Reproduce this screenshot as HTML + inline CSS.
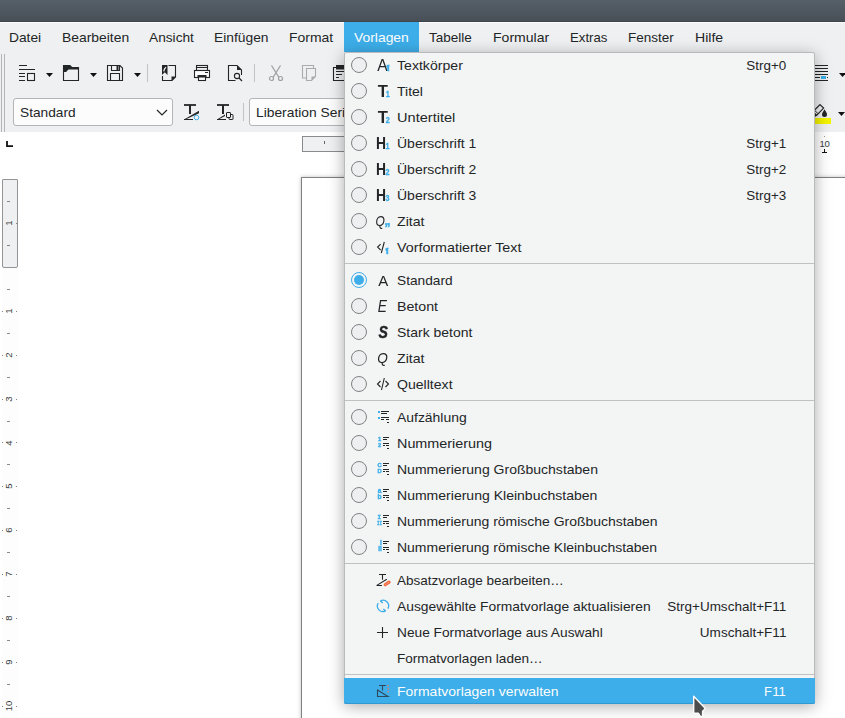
<!DOCTYPE html><html lang="de"><head><meta charset="utf-8"><title>Vorlagen</title><style>
*{box-sizing:border-box;margin:0;padding:0}
html,body{width:845px;height:718px;overflow:hidden;background:#fff}
body{position:relative;font-family:"Liberation Sans","DejaVu Sans",sans-serif;font-size:13.2px;color:#232627;line-height:1}
.abs{position:absolute}
.sx{display:inline-block;white-space:nowrap}
#title{left:0;top:0;width:845px;height:21px;background:linear-gradient(#566069,#484f57)}
#tline{left:0;top:21px;width:845px;height:1px;background:#3e454c}
#wline{left:0;top:22px;width:845px;height:1px;background:#fcfcfc}
#menubar{left:0;top:23px;width:845px;height:29px;background:#eff0f1}
#tb{left:0;top:52px;width:845px;height:80px;background:#eff0f1}
.mi{position:absolute;top:23px;height:30px;line-height:30px;white-space:nowrap}
#msel{left:344px;top:22px;width:75px;height:30px;background:#3daee9}
.t{position:absolute;white-space:nowrap;line-height:16px;height:16px}
.ic{position:absolute;width:16px;height:16px;overflow:visible}
.sep{position:absolute;width:1px;background:#c2c3c4}
.combo{position:absolute;height:28px;top:98px;border:1px solid #b3b5b6;border-radius:3px;background:#fcfcfc}
#popup{left:344px;top:52px;width:471px;height:651px;background:#f3f4f4;border:1px solid #b9babb;border-radius:2px;box-shadow:0 3px 16px 0 rgba(0,0,0,.34)}
.row{position:absolute;left:1px;width:468px;height:26px}
.row .lbl{position:absolute;left:51px;top:6px;line-height:16px;white-space:nowrap}
.row .sc{position:absolute;right:28px;top:6px;line-height:16px;white-space:nowrap}
.row .rad{position:absolute;left:5px;top:5px;width:16px;height:16px;border:1px solid #7f8182;border-radius:50%;background:#eeeff0}
.row .rad.on{border-color:#3daee9;background:#f3f4f4}
.row .rad.on::after{content:"";position:absolute;left:2px;top:2px;width:10px;height:10px;border-radius:50%;background:#3daee9}
.row svg{position:absolute;left:29px;top:5px;width:16px;height:16px;overflow:visible;will-change:transform}
.hsep{position:absolute;left:0;width:469px;height:1px;background:#c0c1c2}
.row.hl{background:#3daee9;color:#fcfcfc;left:-1px;width:471px;padding-left:2px;height:26px;border-radius:0 0 2px 2px;box-shadow:inset 0 -1px 0 #3198d2}
.row.hl .lbl{left:53px}.row.hl .sc{right:29px}.row.hl svg{left:31px}
</style></head><body><div class="abs" id="title"></div><div class="abs" id="tline"></div><div class="abs" id="wline"></div>
<div class="abs" id="menubar"></div><div class="abs" id="tb"></div>
<div class="abs" id="msel"></div>
<div class="mi" style="left:9px"><span class="sx" style="transform:scaleX(1.0446);transform-origin:left center">Datei</span></div>
<div class="mi" style="left:62px"><span class="sx" style="transform:scaleX(1.0531);transform-origin:left center">Bearbeiten</span></div>
<div class="mi" style="left:149px"><span class="sx" style="transform:scaleX(1.0379);transform-origin:left center">Ansicht</span></div>
<div class="mi" style="left:214px"><span class="sx" style="transform:scaleX(1.0465);transform-origin:left center">Einfügen</span></div>
<div class="mi" style="left:289px"><span class="sx" style="transform:scaleX(1.0565);transform-origin:left center">Format</span></div>
<div class="mi" style="left:354px;color:#fcfcfc"><span class="sx" style="transform:scaleX(1.0525);transform-origin:left center">Vorlagen</span></div>
<div class="mi" style="left:429px"><span class="sx" style="transform:scaleX(1.0254);transform-origin:left center">Tabelle</span></div>
<div class="mi" style="left:493px"><span class="sx" style="transform:scaleX(1.0649);transform-origin:left center">Formular</span></div>
<div class="mi" style="left:570px"><span class="sx" style="transform:scaleX(1.0017);transform-origin:left center">Extras</span></div>
<div class="mi" style="left:628px"><span class="sx" style="transform:scaleX(1.0227);transform-origin:left center">Fenster</span></div>
<div class="mi" style="left:695px"><span class="sx" style="transform:scaleX(1.0669);transform-origin:left center">Hilfe</span></div>
<div class="abs" style="left:0;top:132px;width:845px;height:586px;background:#fff"></div>
<svg class="abs" style="left:6px;top:141px" width="8" height="7" viewBox="0 0 8 7"><path d="M1 0v5.200h6" fill="none" stroke="#111" stroke-width="1.800"/></svg>
<div class="abs" style="left:302px;top:136px;width:200px;height:16px;background:#eff0f1;border:1px solid #8a8b8c;border-right:0"></div>
<div class="abs" style="left:324px;top:141px;width:1px;height:3px;background:#666"></div>
<div class="abs" style="left:301px;top:177px;width:560px;height:560px;background:#fff;border:1px solid #808080;box-shadow:0 0 4px rgba(0,0,0,.25)"></div>
<div class="abs" style="left:2px;top:179px;width:16px;height:540px;background:#fdfdfd"></div>
<div class="abs" style="left:2px;top:179px;width:16px;height:89px;background:#eff0f1;border:1px solid #929495;border-radius:1px 1px 2px 2px"></div>
<div class="abs" style="left:7px;top:201px;width:3px;height:1px;background:#808283"></div>
<div class="abs" style="left:7px;top:245px;width:3px;height:1px;background:#808283"></div>
<div class="abs" style="left:-1.5px;top:216.8px;width:20px;height:12px;line-height:12px;text-align:center;font-size:9.5px;color:#3a3d3f;transform:rotate(-90deg)">1</div>
<div class="abs" style="left:16px;top:223px;width:1px;height:1px;background:#888"></div>
<div class="abs" style="left:7px;top:289px;width:3px;height:1px;background:#8a8c8d"></div>
<div class="abs" style="left:2px;top:311px;width:1px;height:1px;background:#888"></div>
<div class="abs" style="left:16px;top:311px;width:1px;height:1px;background:#888"></div>
<div class="abs" style="left:-1.5px;top:304.8px;width:20px;height:12px;line-height:12px;text-align:center;font-size:9.5px;color:#3a3d3f;transform:rotate(-90deg)">1</div>
<div class="abs" style="left:7px;top:333px;width:3px;height:1px;background:#8a8c8d"></div>
<div class="abs" style="left:2px;top:355px;width:1px;height:1px;background:#888"></div>
<div class="abs" style="left:16px;top:355px;width:1px;height:1px;background:#888"></div>
<div class="abs" style="left:-1.5px;top:348.7px;width:20px;height:12px;line-height:12px;text-align:center;font-size:9.5px;color:#3a3d3f;transform:rotate(-90deg)">2</div>
<div class="abs" style="left:7px;top:377px;width:3px;height:1px;background:#8a8c8d"></div>
<div class="abs" style="left:2px;top:399px;width:1px;height:1px;background:#888"></div>
<div class="abs" style="left:16px;top:399px;width:1px;height:1px;background:#888"></div>
<div class="abs" style="left:-1.5px;top:392.6px;width:20px;height:12px;line-height:12px;text-align:center;font-size:9.5px;color:#3a3d3f;transform:rotate(-90deg)">3</div>
<div class="abs" style="left:7px;top:421px;width:3px;height:1px;background:#8a8c8d"></div>
<div class="abs" style="left:2px;top:442px;width:1px;height:1px;background:#888"></div>
<div class="abs" style="left:16px;top:442px;width:1px;height:1px;background:#888"></div>
<div class="abs" style="left:-1.5px;top:436.5px;width:20px;height:12px;line-height:12px;text-align:center;font-size:9.5px;color:#3a3d3f;transform:rotate(-90deg)">4</div>
<div class="abs" style="left:7px;top:464px;width:3px;height:1px;background:#8a8c8d"></div>
<div class="abs" style="left:2px;top:486px;width:1px;height:1px;background:#888"></div>
<div class="abs" style="left:16px;top:486px;width:1px;height:1px;background:#888"></div>
<div class="abs" style="left:-1.5px;top:480.4px;width:20px;height:12px;line-height:12px;text-align:center;font-size:9.5px;color:#3a3d3f;transform:rotate(-90deg)">5</div>
<div class="abs" style="left:7px;top:508px;width:3px;height:1px;background:#8a8c8d"></div>
<div class="abs" style="left:2px;top:530px;width:1px;height:1px;background:#888"></div>
<div class="abs" style="left:16px;top:530px;width:1px;height:1px;background:#888"></div>
<div class="abs" style="left:-1.5px;top:524.3px;width:20px;height:12px;line-height:12px;text-align:center;font-size:9.5px;color:#3a3d3f;transform:rotate(-90deg)">6</div>
<div class="abs" style="left:7px;top:552px;width:3px;height:1px;background:#8a8c8d"></div>
<div class="abs" style="left:2px;top:574px;width:1px;height:1px;background:#888"></div>
<div class="abs" style="left:16px;top:574px;width:1px;height:1px;background:#888"></div>
<div class="abs" style="left:-1.5px;top:568.2px;width:20px;height:12px;line-height:12px;text-align:center;font-size:9.5px;color:#3a3d3f;transform:rotate(-90deg)">7</div>
<div class="abs" style="left:7px;top:596px;width:3px;height:1px;background:#8a8c8d"></div>
<div class="abs" style="left:2px;top:618px;width:1px;height:1px;background:#888"></div>
<div class="abs" style="left:16px;top:618px;width:1px;height:1px;background:#888"></div>
<div class="abs" style="left:-1.5px;top:612.1px;width:20px;height:12px;line-height:12px;text-align:center;font-size:9.5px;color:#3a3d3f;transform:rotate(-90deg)">8</div>
<div class="abs" style="left:7px;top:640px;width:3px;height:1px;background:#8a8c8d"></div>
<div class="abs" style="left:2px;top:662px;width:1px;height:1px;background:#888"></div>
<div class="abs" style="left:16px;top:662px;width:1px;height:1px;background:#888"></div>
<div class="abs" style="left:-1.5px;top:656.0px;width:20px;height:12px;line-height:12px;text-align:center;font-size:9.5px;color:#3a3d3f;transform:rotate(-90deg)">9</div>
<div class="abs" style="left:7px;top:684px;width:3px;height:1px;background:#8a8c8d"></div>
<div class="abs" style="left:2px;top:706px;width:1px;height:1px;background:#888"></div>
<div class="abs" style="left:16px;top:706px;width:1px;height:1px;background:#888"></div>
<div class="abs" style="left:-1.5px;top:699.9px;width:20px;height:12px;line-height:12px;text-align:center;font-size:9.5px;color:#3a3d3f;transform:rotate(-90deg)">10</div>
<div class="t" style="left:819.5px;top:135.500px;font-size:9.600px;color:#3a3d3f;letter-spacing:-0.400px">10</div>
<div class="abs" style="left:824px;top:136px;width:1px;height:1px;background:#999"></div>
<svg class="abs" style="left:822px;top:149px" width="5" height="4" viewBox="0 0 5 4"><path d="M2.500 0v3.500M0 3.500h5" fill="none" stroke="#111" stroke-width="1"/></svg>
<div class="abs" style="left:1px;top:54px;width:1px;height:78px;background:#b4b5b6"></div><div class="abs" style="left:4px;top:54px;width:1px;height:78px;background:#b4b5b6"></div>
<svg class="ic" style="left:19px;top:65px" width="16" height="16" viewBox="0 0 16 16"><path d="M0 0.5h8M0 4.5h16M0 8.5h6M0 11.5h6M0 15.5h6" stroke="#232627" stroke-width="1.1" fill="none"/><rect x="8.5" y="8.5" width="7" height="7" stroke="#232627" stroke-width="1.1" fill="none"/></svg>
<svg class="abs" style="left:46px;top:73px" width="8" height="5" viewBox="0 0 8 5"><path d="M0 0h7L3.500 4z" fill="#111"/></svg>
<svg class="ic" style="left:63px;top:65px" width="16" height="16" viewBox="0 0 16 16"><path d="M0.5 15.5v-15h6l2 2h7v13z" fill="none" stroke="#232627" stroke-width="1.1"/><path d="M0 0h7l2 2h7v2.500h-10.500l-2.500 2.500h-3z" fill="#232627"/></svg>
<svg class="abs" style="left:90px;top:73px" width="8" height="5" viewBox="0 0 8 5"><path d="M0 0h7L3.500 4z" fill="#111"/></svg>
<svg class="ic" style="left:107px;top:65px" width="16" height="16" viewBox="0 0 16 16"><path d="M0.5 0.5h12.500l2.500 2.500v12.500h-15z" fill="none" stroke="#232627" stroke-width="1.1"/><path d="M4.500 0.5v5h8v-5M3.500 15.500v-7h9v7" fill="none" stroke="#232627" stroke-width="1.1"/><rect x="9.500" y="1" width="2" height="4" fill="#232627"/></svg>
<svg class="abs" style="left:134px;top:73px" width="8" height="5" viewBox="0 0 8 5"><path d="M0 0h7L3.500 4z" fill="#111"/></svg>
<div class="sep" style="left:147px;top:64px;height:18px"></div>
<svg class="ic" style="left:162px;top:65px" width="16" height="16" viewBox="0 0 16 16"><path d="M6.500 0.5h7v11.500l-3.500 3.500h-9.500v-4.500" fill="none" stroke="#232627" stroke-width="1.1"/><path d="M0 0h5.500v10l-2.750-2.700-2.750 2.700z" fill="#232627"/><path d="M9.500 16v-4.500h4.500z" fill="#232627"/><path d="M1.700 6.300c0.300-2 1-3 2.300-4" stroke="#eff0f1" stroke-width="1.3" fill="none"/></svg>
<svg class="ic" style="left:194px;top:65px" width="16" height="16" viewBox="0 0 16 16"><rect x="2.500" y="0.5" width="11" height="5" fill="none" stroke="#232627" stroke-width="1.1"/><path d="M3 2.500h10" stroke="#232627"/><rect x="0.5" y="5.500" width="15" height="7" fill="#fcfcfc" stroke="#232627" stroke-width="1.1"/><rect x="3.500" y="10" width="9" height="2.500" fill="#232627"/><rect x="4.500" y="12" width="7" height="3.500" fill="#fcfcfc" stroke="#232627" stroke-width="1.1"/><path d="M11 7.500h3" stroke="#232627"/></svg>
<svg class="ic" style="left:228px;top:65px" width="16" height="16" viewBox="0 0 16 16"><path d="M7.500 15.500h-7v-15h8.500l4.500 4.500v5" fill="none" stroke="#232627" stroke-width="1.1"/><path d="M9 0.5v4.500h4.500z" fill="#232627"/><circle cx="9" cy="11" r="2.600" fill="none" stroke="#232627" stroke-width="1.1"/><path d="M11 13l3 3" stroke="#232627" stroke-width="1.3"/></svg>
<div class="sep" style="left:254px;top:64px;height:18px"></div>
<svg class="ic" style="left:269px;top:65px" width="16" height="16" viewBox="0 0 16 16"><path d="M2.500 0.5l7.500 12M11.500 0.5l-7.500 12" fill="none" stroke="#9fa1a2" stroke-width="1.3"/><circle cx="2.500" cy="13.500" r="2" fill="none" stroke="#9fa1a2" stroke-width="1.2"/><circle cx="11.500" cy="13.500" r="2" fill="none" stroke="#9fa1a2" stroke-width="1.2"/></svg>
<svg class="ic" style="left:302px;top:65px" width="16" height="16" viewBox="0 0 16 16"><path d="M4 13h-3.500v-12.500h11v3" fill="none" stroke="#a9abac" stroke-width="1.1"/><path d="M4.500 3.500h9v8l-4 4h-5z" fill="#eff0f1" stroke="#a9abac" stroke-width="1.1"/><path d="M9.500 15.500v-4h4z" fill="#a9abac"/></svg>
<svg class="ic" style="left:333px;top:65px" width="16" height="16" viewBox="0 0 16 16"><path d="M0.5 2.500h15v13h-15z" fill="none" stroke="#232627" stroke-width="1.1"/><path d="M3 0h10v4.500h-10z" fill="#232627"/><path d="M3 6.500h10M3 9.500h6M3 12.500h3" stroke="#232627"/></svg>
<svg class="ic" style="left:815px;top:65px;overflow:hidden" width="16" height="16" viewBox="0 0 16 16"><path d="M0 0.5h13M0 3.500h13M0 6.500h13M0 9.500h13M0 12.500h5M12 12.500h1M0 15.500h13" stroke="#232627" stroke-width="1.1" fill="none"/><rect x="6" y="11" width="5" height="3" fill="#3daee9"/></svg>
<svg class="abs" style="left:839px;top:73px" width="8" height="5" viewBox="0 0 8 5"><path d="M0 0h7L3.500 4z" fill="#111"/></svg>
<div class="combo" style="left:13px;width:160px"></div>
<div class="t" style="left:20px;top:105px"><span class="sx" style="transform:scaleX(1.0379);transform-origin:left center">Standard</span></div>
<svg class="abs" style="left:156px;top:109px" width="12" height="7" viewBox="0 0 12 7"><path d="M1 1l5 5 5-5" fill="none" stroke="#232627" stroke-width="1.2"/></svg>
<svg class="ic" style="left:184px;top:104px" width="16" height="16" viewBox="0 0 16 16"><path d="M0 1h12" stroke="#232627" stroke-width="1.800"/><path d="M6 1v9" stroke="#232627" stroke-width="2"/><path d="M0 15.500h9" stroke="#232627" fill="none"/><path d="M0 15.500L15 6.800v2.400L1.500 15.500z" fill="#232627"/><circle cx="12.500" cy="13.500" r="2.300" fill="#eff0f1" stroke="#3daee9" stroke-width="1"/><path d="M10.500 15.500l4-4" stroke="#eff0f1" stroke-width="0.800"/></svg>
<svg class="ic" style="left:217px;top:104px" width="16" height="16" viewBox="0 0 16 16"><path d="M0 1h12" stroke="#232627" stroke-width="1.800"/><path d="M6 1v9" stroke="#232627" stroke-width="2"/><path d="M0 15.500h9" stroke="#232627" fill="none"/><path d="M0 15.500L8 10.500v1.600L1.500 15.500z" fill="#232627"/><rect x="12" y="10.500" width="4" height="5" rx="0.500" fill="#eff0f1" stroke="#232627"/><rect x="9.500" y="8.500" width="4" height="5" rx="0.500" fill="#eff0f1" stroke="#232627"/></svg>
<div class="sep" style="left:243px;top:103px;height:18px"></div>
<div class="combo" style="left:249px;width:200px"></div>
<div class="t" style="left:256px;top:105px"><span class="sx" style="transform:scaleX(1.0472);transform-origin:left center">Liberation Serif</span></div>
<svg class="ic" style="left:815px;top:104px;overflow:hidden" width="16" height="16" viewBox="0 0 16 16"><path d="M5 0.600L8.600 4.100 1.600 11.300 -2 7.700z" fill="none" stroke="#232627" stroke-width="1.200"/><path d="M-0.500 6.200L3 9.700" stroke="#232627"/><path d="M0 10l1.800 1.600-1.800 1.400z" fill="#232627"/><path d="M9.500 5.300C10.500 7.500 12 9 12 10.400a2.500 2.500 0 0 1-5 0C7 9 8.500 7.500 9.500 5.300z" fill="#232627"/></svg>
<div class="abs" style="left:815px;top:118px;width:16px;height:6px;background:#f4f400"></div>
<svg class="abs" style="left:838px;top:112px" width="8" height="5" viewBox="0 0 8 5"><path d="M0 0h7L3.500 4z" fill="#111"/></svg>
<div class="abs" id="popup"><div class="row" style="top:-1px"><div class="rad"></div><svg viewBox="0 0 16 16"><text x="2.2" y="14" font-size="15.6" font-weight="normal" font-style="normal" fill="#232627" textLength="10.4" lengthAdjust="spacingAndGlyphs">A</text><text x="11.6" y="13.4" font-size="6.8" font-weight="bold" font-style="normal" fill="#3daee9" stroke="#3daee9" stroke-width="0.6" textLength="3" lengthAdjust="spacingAndGlyphs">¶</text></svg><div class="lbl"><span class="sx" style="transform:scaleX(1.0693);transform-origin:left center">Textkörper</span></div><div class="sc"><span class="sx" style="transform:scaleX(1.0179);transform-origin:right center">Strg+0</span></div></div><div class="row" style="top:25px"><div class="rad"></div><svg viewBox="0 0 16 16"><text x="2.8" y="14" font-size="16.6" font-weight="bold" font-style="normal" fill="#232627" >T</text><text x="10.8" y="14" font-size="8.2" font-weight="bold" font-style="normal" fill="#3daee9" stroke="#3daee9" stroke-width="0.3" textLength="4" lengthAdjust="spacingAndGlyphs">1</text></svg><div class="lbl"><span class="sx" style="transform:scaleX(1.0627);transform-origin:left center">Titel</span></div></div><div class="row" style="top:51px"><div class="rad"></div><svg viewBox="0 0 16 16"><text x="2.8" y="14" font-size="16.6" font-weight="bold" font-style="normal" fill="#232627" >T</text><text x="10.8" y="14" font-size="8.2" font-weight="bold" font-style="normal" fill="#3daee9" stroke="#3daee9" stroke-width="0.3" textLength="4" lengthAdjust="spacingAndGlyphs">2</text></svg><div class="lbl"><span class="sx" style="transform:scaleX(1.1057);transform-origin:left center">Untertitel</span></div></div><div class="row" style="top:77px"><div class="rad"></div><svg viewBox="0 0 16 16"><text x="1" y="14.3" font-size="17.2" font-weight="bold" font-style="normal" fill="#232627" textLength="10" lengthAdjust="spacingAndGlyphs">H</text><text x="10.6" y="14.2" font-size="8.2" font-weight="bold" font-style="normal" fill="#3daee9" stroke="#3daee9" stroke-width="0.3" textLength="4" lengthAdjust="spacingAndGlyphs">1</text></svg><div class="lbl"><span class="sx" style="transform:scaleX(1.0621);transform-origin:left center">Überschrift 1</span></div><div class="sc"><span class="sx" style="transform:scaleX(1.0179);transform-origin:right center">Strg+1</span></div></div><div class="row" style="top:103px"><div class="rad"></div><svg viewBox="0 0 16 16"><text x="1" y="14.3" font-size="17.2" font-weight="bold" font-style="normal" fill="#232627" textLength="10" lengthAdjust="spacingAndGlyphs">H</text><text x="10.6" y="14.2" font-size="8.2" font-weight="bold" font-style="normal" fill="#3daee9" stroke="#3daee9" stroke-width="0.3" textLength="4" lengthAdjust="spacingAndGlyphs">2</text></svg><div class="lbl"><span class="sx" style="transform:scaleX(1.0621);transform-origin:left center">Überschrift 2</span></div><div class="sc"><span class="sx" style="transform:scaleX(1.0179);transform-origin:right center">Strg+2</span></div></div><div class="row" style="top:129px"><div class="rad"></div><svg viewBox="0 0 16 16"><text x="1" y="14.3" font-size="17.2" font-weight="bold" font-style="normal" fill="#232627" textLength="10" lengthAdjust="spacingAndGlyphs">H</text><text x="10.6" y="14.2" font-size="8.2" font-weight="bold" font-style="normal" fill="#3daee9" stroke="#3daee9" stroke-width="0.3" textLength="4" lengthAdjust="spacingAndGlyphs">3</text></svg><div class="lbl"><span class="sx" style="transform:scaleX(1.0621);transform-origin:left center">Überschrift 3</span></div><div class="sc"><span class="sx" style="transform:scaleX(1.0179);transform-origin:right center">Strg+3</span></div></div><div class="row" style="top:155px"><div class="rad"></div><svg viewBox="0 0 16 16"><text x="0.5" y="12.6" font-size="14.6" font-weight="normal" font-style="italic" fill="#232627" textLength="9.4" lengthAdjust="spacingAndGlyphs">Q</text><text x="9.4" y="12.4" font-size="13" font-weight="bold" font-style="normal" fill="#3daee9" stroke="#3daee9" stroke-width="0.5" textLength="6" lengthAdjust="spacingAndGlyphs">„</text></svg><div class="lbl"><span class="sx" style="transform:scaleX(1.0713);transform-origin:left center">Zitat</span></div></div><div class="row" style="top:181px"><div class="rad"></div><svg viewBox="0 0 16 16"><path d="M5.6 5.2l-3 2.9 3 2.9M9.3 3l-3 11" fill="none" stroke="#232627" stroke-width="1.1"/><text x="10.6" y="13.6" font-size="6.8" font-weight="bold" font-style="normal" fill="#3daee9" stroke="#3daee9" stroke-width="0.6" textLength="3" lengthAdjust="spacingAndGlyphs">¶</text></svg><div class="lbl"><span class="sx" style="transform:scaleX(1.0835);transform-origin:left center">Vorformatierter Text</span></div></div><div class="hsep" style="top:210px"></div><div class="row" style="top:214px"><div class="rad on"></div><svg viewBox="0 0 16 16"><text x="3.2" y="13.8" font-size="15.4" font-weight="normal" font-style="normal" fill="#232627" textLength="10" lengthAdjust="spacingAndGlyphs">A</text></svg><div class="lbl"><span class="sx" style="transform:scaleX(1.0379);transform-origin:left center">Standard</span></div></div><div class="row" style="top:240px"><div class="rad"></div><svg viewBox="0 0 16 16"><text x="2.8" y="14" font-size="16.6" font-weight="normal" font-style="italic" fill="#232627" textLength="9.2" lengthAdjust="spacingAndGlyphs">E</text></svg><div class="lbl"><span class="sx" style="transform:scaleX(1.077);transform-origin:left center">Betont</span></div></div><div class="row" style="top:266px"><div class="rad"></div><svg viewBox="0 0 16 16"><text x="3.4" y="14.2" font-size="16.6" font-weight="bold" font-style="italic" fill="#232627" stroke="#232627" stroke-width="0.4" textLength="9.4" lengthAdjust="spacingAndGlyphs">S</text></svg><div class="lbl"><span class="sx" style="transform:scaleX(1.0609);transform-origin:left center">Stark betont</span></div></div><div class="row" style="top:292px"><div class="rad"></div><svg viewBox="0 0 16 16"><text x="2.2" y="12.8" font-size="14.6" font-weight="normal" font-style="italic" fill="#232627" textLength="10.6" lengthAdjust="spacingAndGlyphs">Q</text></svg><div class="lbl"><span class="sx" style="transform:scaleX(1.0713);transform-origin:left center">Zitat</span></div></div><div class="row" style="top:318px"><div class="rad"></div><svg viewBox="0 0 16 16"><path d="M5.5 5l-3 3 3 3M10.5 5l3 3-3 3M9.3 2l-2.800 12" fill="none" stroke="#232627" stroke-width="1.1"/></svg><div class="lbl"><span class="sx" style="transform:scaleX(1.0675);transform-origin:left center">Quelltext</span></div></div><div class="hsep" style="top:347px"></div><div class="row" style="top:351px"><div class="rad"></div><svg viewBox="0 0 16 16"><path d="M6 2.5H14M6 4.5H12M6 8.5H14M6 10.5H9M11 10.5H14M12 13.5H14" stroke="#232627" fill="none"/><rect x="3" y="2" width="2" height="2" fill="#3daee9"/><rect x="3" y="8" width="2" height="2" fill="#3daee9"/></svg><div class="lbl"><span class="sx" style="transform:scaleX(1.0556);transform-origin:left center">Aufzählung</span></div></div><div class="row" style="top:377px"><div class="rad"></div><svg viewBox="0 0 16 16"><path d="M8 2.5H14M8 4.5H12M8 8.5H14M8 10.5H10M11 10.5H14M12 13.5H14" stroke="#232627" fill="none"/><text x="4.6" y="6.2" font-size="5.8" font-weight="bold" font-style="normal" fill="#3daee9" text-anchor="middle" stroke="#3daee9" stroke-width="0.4">1</text><text x="4.6" y="12.2" font-size="5.8" font-weight="bold" font-style="normal" fill="#3daee9" text-anchor="middle" stroke="#3daee9" stroke-width="0.4">2</text></svg><div class="lbl"><span class="sx" style="transform:scaleX(1.0898);transform-origin:left center">Nummerierung</span></div></div><div class="row" style="top:403px"><div class="rad"></div><svg viewBox="0 0 16 16"><path d="M8 2.5H14M8 4.5H12M8 8.5H14M8 10.5H10M11 10.5H14M12 13.5H14" stroke="#232627" fill="none"/><text x="4.6" y="6.2" font-size="5.8" font-weight="bold" font-style="normal" fill="#3daee9" text-anchor="middle" stroke="#3daee9" stroke-width="0.4">C</text><text x="4.6" y="12.2" font-size="5.8" font-weight="bold" font-style="normal" fill="#3daee9" text-anchor="middle" stroke="#3daee9" stroke-width="0.4">D</text></svg><div class="lbl"><span class="sx" style="transform:scaleX(1.0626);transform-origin:left center">Nummerierung Großbuchstaben</span></div></div><div class="row" style="top:429px"><div class="rad"></div><svg viewBox="0 0 16 16"><path d="M8 2.5H14M8 4.5H12M8 8.5H14M8 10.5H10M11 10.5H14M12 13.5H14" stroke="#232627" fill="none"/><text x="4.6" y="6.2" font-size="6.6" font-weight="bold" font-style="normal" fill="#3daee9" text-anchor="middle" stroke="#3daee9" stroke-width="0.4">a</text><text x="4.6" y="12.2" font-size="6.6" font-weight="bold" font-style="normal" fill="#3daee9" text-anchor="middle" stroke="#3daee9" stroke-width="0.4">b</text></svg><div class="lbl"><span class="sx" style="transform:scaleX(1.0638);transform-origin:left center">Nummerierung Kleinbuchstaben</span></div></div><div class="row" style="top:455px"><div class="rad"></div><svg viewBox="0 0 16 16"><path d="M8 2.5H14M8 4.5H12M8 8.5H14M8 10.5H10M11 10.5H14M12 13.5H14" stroke="#232627" fill="none"/><text x="4.4" y="6.2" font-size="6" font-weight="bold" font-style="normal" fill="#3daee9" text-anchor="middle" stroke="#3daee9" stroke-width="0.4" font-family="Liberation Mono, monospace">I</text><text x="4.4" y="12.2" font-size="6" font-weight="bold" font-style="normal" fill="#3daee9" text-anchor="middle" stroke="#3daee9" stroke-width="0.4" font-family="Liberation Mono, monospace" textLength="5" lengthAdjust="spacingAndGlyphs">II</text></svg><div class="lbl"><span class="sx" style="transform:scaleX(1.0583);transform-origin:left center">Nummerierung römische Großbuchstaben</span></div></div><div class="row" style="top:481px"><div class="rad"></div><svg viewBox="0 0 16 16"><path d="M8 2.5H14M8 4.5H12M8 8.5H14M8 10.5H10M11 10.5H14M12 13.5H14" stroke="#232627" fill="none"/><text x="5.8" y="6.2" font-size="6.6" font-weight="bold" font-style="normal" fill="#3daee9" text-anchor="middle" stroke="#3daee9" stroke-width="0.4">i</text><text x="5" y="12.2" font-size="6.6" font-weight="bold" font-style="normal" fill="#3daee9" text-anchor="middle" stroke="#3daee9" stroke-width="0.4" textLength="3.6" lengthAdjust="spacingAndGlyphs">ii</text></svg><div class="lbl"><span class="sx" style="transform:scaleX(1.0593);transform-origin:left center">Nummerierung römische Kleinbuchstaben</span></div></div><div class="hsep" style="top:510px"></div><div class="row" style="top:514px"><svg viewBox="0 0 16 16"><path d="M4 2.5h7M7.5 2.5v5.2" stroke="#232627" stroke-width="1.1" fill="none"/><path d="M1.5 13.5h5.5M1.8 13.4L11.8 7.2" stroke="#232627" stroke-width="1.1" fill="none"/><path d="M10.2 12.700L14 10.100" stroke="#f0683c" stroke-width="3.200" stroke-linecap="round" fill="none"/><path d="M10.400 12.600L13.800 10.200" stroke="#fbe3da" stroke-width="0.800" stroke-dasharray="0.900 0.900" fill="none"/></svg><div class="lbl"><span class="sx" style="transform:scaleX(1.0252);transform-origin:left center">Absatzvorlage bearbeiten…</span></div></div><div class="row" style="top:540px"><svg viewBox="0 0 16 16"><path d="M5.500 2.900A5.500 5.500 0 0 1 12.800 10.600M10.500 12.900A5.500 5.500 0 0 1 3.200 5.200" fill="none" stroke="#3daee9" stroke-width="1.300"/><path d="M5.300 2.700L7.700 4.900M10.700 13.100L8.300 10.900" fill="none" stroke="#3daee9" stroke-width="1.400"/></svg><div class="lbl"><span class="sx" style="transform:scaleX(1.0484);transform-origin:left center">Ausgewählte Formatvorlage aktualisieren</span></div><div class="sc"><span class="sx" style="transform:scaleX(1.0238);transform-origin:right center">Strg+Umschalt+F11</span></div></div><div class="row" style="top:566px"><svg viewBox="0 0 16 16"><path d="M7.5 3v11M2 8.500h11" stroke="#232627" stroke-width="1.100" fill="none"/></svg><div class="lbl"><span class="sx" style="transform:scaleX(1.0392);transform-origin:left center">Neue Formatvorlage aus Auswahl</span></div><div class="sc"><span class="sx" style="transform:scaleX(1.0255);transform-origin:right center">Umschalt+F11</span></div></div><div class="row" style="top:592px"><div class="lbl"><span class="sx" style="transform:scaleX(1.0294);transform-origin:left center">Formatvorlagen laden…</span></div></div><div class="hsep" style="top:621px"></div><div class="row hl" style="top:625px"><svg viewBox="0 0 16 16"><path d="M4 2.500h7M7.500 2.500v5" stroke="#2f4a5c" stroke-width="1.100" fill="none"/><path d="M2.500 7v6.500h10.500z" fill="none" stroke="#2f4a5c" stroke-width="1.100"/><path d="M13.200 2v1.600M13.200 5v1.600M13.200 8v1.600" stroke="#c98272" stroke-width="1.600"/></svg><div class="lbl"><span class="sx" style="transform:scaleX(1.0597);transform-origin:left center">Formatvorlagen verwalten</span></div><div class="sc"><span class="sx" style="transform:scaleX(0.9943);transform-origin:right center">F11</span></div></div></div>
<svg class="abs" style="left:692px;top:695px" width="16" height="23" viewBox="0 0 16 23"><path d="M1.700 1.300L13.400 13.500 10.600 16.200 10.500 21.200 8.500 21.700 6.300 18.200 1.700 18.200z" fill="#4d4d4d" stroke="#fcfcfc" stroke-width="1.400" stroke-linejoin="round"/></svg></body></html>
